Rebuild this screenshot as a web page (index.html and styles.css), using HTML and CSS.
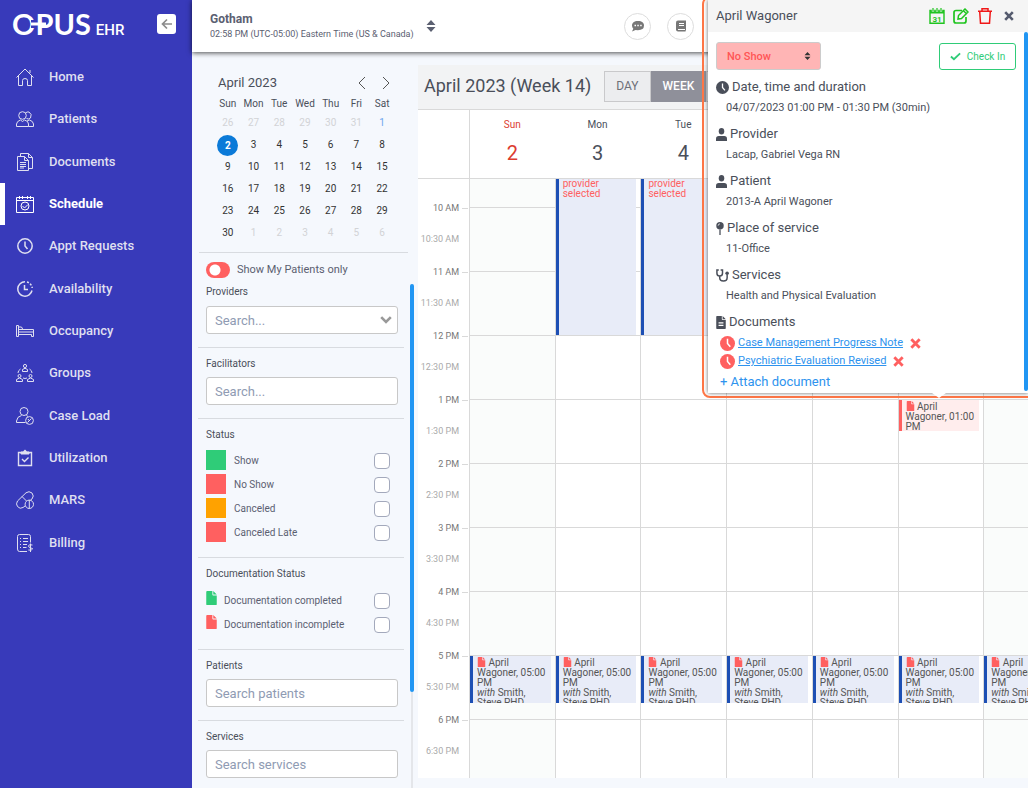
FILE: index.html
```html
<!DOCTYPE html>
<html lang="en">
<head>
<meta charset="utf-8">
<title>Opus EHR - Schedule</title>
<link rel="stylesheet" href="styles.css">
</head>
<body>
<svg class="sprite" aria-hidden="true">
  <symbol id="i-file" viewBox="0 0 12 16"><path fill="currentColor" d="M0 1Q0 0 1 0H7V4Q7 5 8 5H12V15Q12 16 11 16H1Q0 16 0 15ZM8 0L12 4H8Z"/></symbol>
  <symbol id="i-clock" viewBox="0 0 16 16"><circle cx="8" cy="8" r="8" fill="currentColor"/><path d="M8 3V8L11 11.500" fill="none" stroke="#fff" stroke-width="1.600"/></symbol>
  <symbol id="i-user" viewBox="0 0 14 14"><circle cx="7" cy="3.500" r="3.500" fill="currentColor"/><path fill="currentColor" d="M0 14V11.500Q0 8.500 3.500 8.500H10.500Q14 8.500 14 11.500V14Z"/></symbol>
  <symbol id="i-sort" viewBox="0 0 10 12"><path fill="currentColor" d="M5 0L9.500 5H.5ZM5 12L.5 7H9.500Z"/></symbol>
  <symbol id="i-times" viewBox="0 0 10 10"><path d="M1.200 1.200L8.800 8.800M8.800 1.200L1.200 8.800" stroke="currentColor" stroke-width="2.600" fill="none"/></symbol>
</svg>
<div class="app">
  <aside class="sidebar">
    <div class="brand">
      <div class="logo"><span class="logo-main">OPUS</span><span class="logo-sub">EHR</span><svg class="logo-link" viewBox="0 0 16 8" aria-hidden="true"><path d="M0 0H4V8H0Z" fill="#383aba"/><path d="M0 4H15" stroke="#fff" stroke-width="3"/></svg></div>
      <button class="collapse" type="button" aria-label="Collapse menu"><svg viewBox="0 0 12 12"><path d="M11 6H2M6 1.500L1.500 6L6 10.500" fill="none" stroke="#8c8c8c" stroke-width="1.700"/></svg></button>
    </div>
    <nav class="nav">
      <a href="#home"><svg viewBox="0 0 18 18"><path d="M.5 9.500L9 1L17.500 9.500M2.500 8V17.500H6.500V12.500Q6.500 10.500 9 10.500T11.500 12.500V17.500H15.500V8M14 2V5"/></svg>Home</a>
      <a href="#patients"><svg viewBox="0 0 18 18"><circle cx="6.500" cy="5.500" r="3.800"/><path d="M9.500 3Q11 1.500 13 2Q16.500 4 14.500 8Q13 9.800 10.500 8.500M.5 16.500V14Q1 11 4.500 10L6.500 11.500L8.500 10Q12.500 11 12.500 14V16.500ZM12.500 16.500H17.500V14Q17 11 13.500 10L11 11"/></svg>Patients</a>
      <a href="#documents"><svg viewBox="0 0 18 18"><path d="M1.500 3.500H8.500L12.500 7.500V17.500H1.500ZM8.500 3.500V7.500H12.500M4.500 3.500V.5H12.500L16.500 4.500V15.500H12.500M12.500.5V4.500H16.500M4 9.500H10M4 11.500H10M4 13.500H10M4 15H8"/></svg>Documents</a>
      <a class="active" href="#schedule"><svg viewBox="0 0 18 18"><path d="M.5 2.500H17.500V17.500H.5ZM.5 5.500H17.500M3.500 1V4M6.500 1V4M11.500 1V4M14.500 1V4M6.500 11L8.500 13L12 9.500"/><circle cx="9" cy="11" r="4"/></svg>Schedule</a>
      <a href="#requests"><svg viewBox="0 0 18 18"><circle cx="9" cy="9" r="7.200" stroke-width="1.500"/><path d="M9 4.500V9L11.500 12" stroke-width="1.500"/></svg>Appt Requests</a>
      <a href="#availability"><svg viewBox="0 0 18 18"><path d="M9 1.800A7.200 7.200 0 1 0 16 10.500" stroke-width="1.500"/><path d="M11 2A7.200 7.200 0 0 1 16.200 8" stroke-width="1.500" stroke-dasharray="2 1.500"/><path d="M8.500 5V9.500H12" stroke-width="1.500"/></svg>Availability</a>
      <a href="#occupancy"><svg viewBox="0 0 18 18"><path d="M.5 3.500H2.500V14.500H.5ZM2.500 7.500H17.500V14.500H15.500V12.500H2.500M2.500 10H17.500M3 5H5Q6.500 5 6.500 7.500"/></svg>Occupancy</a>
      <a href="#groups"><svg viewBox="0 0 18 18"><circle cx="9" cy="2" r="1.600"/><path d="M6.500 7.500V5.500Q9 3 11.500 5.500V7.500Z"/><circle cx="3.500" cy="12" r="1.500"/><path d="M.5 17.500V15.500Q3.500 12.500 6.500 15.500V17.500Z"/><circle cx="14.500" cy="12" r="1.500"/><path d="M11.500 17.500V15.500Q14.500 12.500 17.500 15.500V17.500ZM4.500 5Q2 6.500 2 9M13.500 5Q16 6.500 16 9M7 14Q9 15 11 14"/></svg>Groups</a>
      <a href="#caseload"><svg viewBox="0 0 18 18"><circle cx="8" cy="4.500" r="4"/><path d="M9.500 15.500H.5V14Q1 9.500 5.500 8.500M10.500 8.500L12 9.500"/><circle cx="13.500" cy="13.500" r="3.900"/><path d="M11.500 15.500L15.500 11.500M12 12L13 13.500"/></svg>Case Load</a>
      <a href="#utilization"><svg viewBox="0 0 18 18"><path d="M2.500 3.500H15.500V16.500H2.500Z" stroke-width="1.400"/><path d="M5 5V3H7.500Q9 -1 10.500 3H13V5Z" fill="currentColor"/><path d="M6 10L8.500 12.500L12.500 8.500" stroke-width="1.400"/></svg>Utilization</a>
      <a href="#mars"><svg viewBox="0 0 18 18"><path d="M1.500 10L10 1.800Q13 -.5 16 2Q18.500 5 16 8L14.500 9M1.500 10Q-.5 13 1.500 15.500Q4 18.500 7 16.500L9 15M6 5.500L10.500 10"/><circle cx="13.300" cy="13.300" r="4.200"/><path d="M13.300 9V17.500"/></svg>MARS</a>
      <a href="#billing"><svg viewBox="0 0 18 18"><path d="M11 17.500H3.500Q1.500 17.500 1.500 15V2.500Q1.500.5 3.500.5H12.500Q14.500.5 14.500 2.500V8.500M4 4.500H5M7 4.500H12M4 7.500H5M7 7.500H12M4 10.500H5M7 10.500H11M4 13.500H5M7 13.500H10.500"/><path d="M16.500 11Q12.500 10 12.500 12T16.500 14.500Q16.500 16.500 12.300 16M14.500 9.500V18"/></svg>Billing</a>
    </nav>
  </aside>

  <div class="main">
    <header class="topbar">
      <div class="tenant">
        <div><strong>Gotham</strong><span>02:58 PM (UTC-05:00) Eastern Time (US &amp; Canada)</span></div>
        <button type="button" aria-label="Change facility"><svg viewBox="0 0 10 12"><use href="#i-sort"/></svg></button>
      </div>
      <div class="tools">
        <button type="button" aria-label="Messages"><svg viewBox="0 0 14 14"><path fill="#777" d="M7 2C3 2 1 4 1 6.500Q1 8.500 2.300 9.700L1 12.500L4.500 11Q13 12 13 6.500C13 4 11 2 7 2Z"/><path stroke="#fff" stroke-width="1.500" d="M3.500 6.500H5M6.300 6.500H7.800M9.200 6.500H10.700"/></svg></button>
        <button type="button" aria-label="Manual"><svg viewBox="0 0 14 14"><path fill="#777" d="M4 1.500H12V10.500L11.500 12.500H4Q2 12.500 2 10.500V3.500Q2 1.500 4 1.500Z"/><path stroke="#fff" d="M5 4.500H10M5 6.500H10M4 10.500H11"/></svg></button>
      </div>
    </header>

    <div class="content">
      <section class="panel">
        <div class="mini">
          <div class="mini-head"><h2>April 2023</h2>
            <button type="button" aria-label="Previous month"><svg viewBox="0 0 8 14"><path d="M7 1L1 7L7 13"/></svg></button>
            <button type="button" aria-label="Next month"><svg viewBox="0 0 8 14"><path d="M1 1L7 7L1 13"/></svg></button>
          </div>
          <table>
            <thead><tr><th>Sun</th><th>Mon</th><th>Tue</th><th>Wed</th><th>Thu</th><th>Fri</th><th>Sat</th></tr></thead>
            <tbody>
              <tr><td class="off">26</td><td class="off">27</td><td class="off">28</td><td class="off">29</td><td class="off">30</td><td class="off">31</td><td class="today">1</td></tr>
              <tr><td><span class="picked">2</span></td><td>3</td><td>4</td><td>5</td><td>6</td><td>7</td><td>8</td></tr>
              <tr><td>9</td><td>10</td><td>11</td><td>12</td><td>13</td><td>14</td><td>15</td></tr>
              <tr><td>16</td><td>17</td><td>18</td><td>19</td><td>20</td><td>21</td><td>22</td></tr>
              <tr><td>23</td><td>24</td><td>25</td><td>26</td><td>27</td><td>28</td><td>29</td></tr>
              <tr><td>30</td><td class="off">1</td><td class="off">2</td><td class="off">3</td><td class="off">4</td><td class="off">5</td><td class="off">6</td></tr>
            </tbody>
          </table>
        </div>
        <div class="lower">
          <div class="filters">
            <label class="switch"><input type="checkbox">Show My Patients only</label>
            <div class="group first"><label for="prov">Providers</label><div class="combo"><input id="prov" type="text" placeholder="Search..."><svg viewBox="0 0 12 8"><path d="M1.200 1.200L6 6L10.800 1.200" fill="none" stroke="#999" stroke-width="2.600"/></svg></div></div>
            <div class="group"><label for="fac">Facilitators</label><input id="fac" type="text" placeholder="Search..."></div>
            <fieldset class="group"><legend>Status</legend>
              <label class="check"><i class="swatch green"></i><span>Show</span><input type="checkbox"></label>
              <label class="check"><i class="swatch red"></i><span>No Show</span><input type="checkbox"></label>
              <label class="check"><i class="swatch orange"></i><span>Canceled</span><input type="checkbox"></label>
              <label class="check"><i class="swatch red"></i><span>Canceled Late</span><input type="checkbox"></label>
            </fieldset>
            <fieldset class="group docs"><legend>Documentation Status</legend>
              <label class="check"><svg class="c-green"><use href="#i-file"/></svg><span>Documentation completed</span><input type="checkbox"></label>
              <label class="check"><svg class="c-red"><use href="#i-file"/></svg><span>Documentation incomplete</span><input type="checkbox"></label>
            </fieldset>
            <div class="group"><label for="pat">Patients</label><input id="pat" type="text" placeholder="Search patients"></div>
            <div class="group"><label for="srv">Services</label><input id="srv" type="text" placeholder="Search services"></div>
          </div>
          <div class="track"><div class="thumb"></div></div>
        </div>
      </section>

      <section class="week">
        <div class="week-bar"><h1>April 2023 (Week 14)</h1>
          <div class="views"><button type="button">DAY</button><button type="button" class="on">WEEK</button><button type="button">MONTH</button></div>
        </div>
        <div class="days">
          <div></div>
          <div class="sun">Sun<b>2</b></div><div>Mon<b>3</b></div><div>Tue<b>4</b></div><div>Wed<b>5</b></div><div>Thu<b>6</b></div><div>Fri<b>7</b></div><div>Sat<b>8</b></div>
        </div>
        <div class="grid">
          <div class="hours">
            <div>10 AM</div><div class="half">10:30 AM</div><div>11 AM</div><div class="half">11:30 AM</div>
            <div>12 PM</div><div class="half">12:30 PM</div><div>1 PM</div><div class="half">1:30 PM</div>
            <div>2 PM</div><div class="half">2:30 PM</div><div>3 PM</div><div class="half">3:30 PM</div>
            <div>4 PM</div><div class="half">4:30 PM</div><div>5 PM</div><div class="half">5:30 PM</div>
            <div>6 PM</div><div class="half">6:30 PM</div>
          </div>
          <div class="col weekend"><div class="event at5"><svg><use href="#i-file"/></svg> April Wagoner, 05:00 PM<br><em>with</em> Smith, Steve PHD</div></div>
          <div class="col"><div class="event morning">provider selected</div><div class="event at5"><svg><use href="#i-file"/></svg> April Wagoner, 05:00 PM<br><em>with</em> Smith, Steve PHD</div></div>
          <div class="col"><div class="event morning">provider selected</div><div class="event at5"><svg><use href="#i-file"/></svg> April Wagoner, 05:00 PM<br><em>with</em> Smith, Steve PHD</div></div>
          <div class="col"><div class="event at5"><svg><use href="#i-file"/></svg> April Wagoner, 05:00 PM<br><em>with</em> Smith, Steve PHD</div></div>
          <div class="col"><div class="event at5"><svg><use href="#i-file"/></svg> April Wagoner, 05:00 PM<br><em>with</em> Smith, Steve PHD</div></div>
          <div class="col"><div class="event at1"><svg><use href="#i-file"/></svg> April Wagoner, 01:00 PM</div><div class="event at5"><svg><use href="#i-file"/></svg> April Wagoner, 05:00 PM<br><em>with</em> Smith, Steve PHD</div></div>
          <div class="col weekend"><div class="event at5"><svg><use href="#i-file"/></svg> April Wagoner, 05:00 PM<br><em>with</em> Smith, Steve PHD</div></div>
        </div>
      </section>
    </div>
  </div>
</div>

<div class="frame">
  <article class="popup">
    <header class="popup-head"><h2>April Wagoner</h2>
      <button type="button" aria-label="Calendar"><svg class="c-lime" viewBox="0 0 16 16"><path d="M1 2.500H15V15.300H1Z" fill="none" stroke="currentColor" stroke-width="1.400"/><path d="M1 2H15V5.500H1Z" fill="currentColor"/><path d="M4 0V3.500M8 0V3.500M12 0V3.500" stroke="#f5f5f5" stroke-width="2.400"/><path d="M4 0V3M8 0V3M12 0V3" stroke="currentColor" stroke-width="1.200"/><text x="8" y="13.500" text-anchor="middle">31</text></svg></button>
      <button type="button" aria-label="Edit"><svg class="c-lime" viewBox="0 0 16 16"><path d="M9 2.500H3Q1 2.500 1 4.500V13Q1 15 3 15H11Q13 15 13 13V9" fill="none" stroke="currentColor" stroke-width="1.700"/><path d="M5 11L5.500 7.500L12 1L15 4L8.500 10.500ZM10.500 2.800L13.200 5.500" fill="none" stroke="currentColor" stroke-width="1.500"/></svg></button>
      <button type="button" aria-label="Delete"><svg class="c-trash" viewBox="0 0 16 16"><path d="M1 3.200H15M5 3V.8H11V3M2.700 3.500L3.500 15.200H12.500L13.300 3.500" fill="none" stroke="currentColor" stroke-width="1.500"/></svg></button>
      <button type="button" aria-label="Close"><svg class="c-slate small" viewBox="0 0 10 10"><use href="#i-times"/></svg></button>
    </header>
    <div class="popup-main">
      <div class="popup-body">
        <div class="actions">
          <div class="status"><select aria-label="Appointment status"><option>No Show</option></select><svg viewBox="0 0 10 12"><use href="#i-sort"/></svg></div>
          <button class="checkin" type="button"><svg viewBox="0 0 12 9"><path d="M1 4.500L4.300 7.500L11 1" fill="none" stroke="currentColor" stroke-width="2"/></svg>Check In</button>
        </div>
        <dl>
          <dt><svg class="w13" viewBox="0 0 16 16"><use href="#i-clock"/></svg>Date, time and duration</dt><dd>04/07/2023 01:00 PM - 01:30 PM (30min)</dd>
          <dt><svg class="w11" viewBox="0 0 14 14" preserveAspectRatio="none"><use href="#i-user"/></svg>Provider</dt><dd>Lacap, Gabriel Vega RN</dd>
          <dt><svg class="w11" viewBox="0 0 14 14" preserveAspectRatio="none"><use href="#i-user"/></svg>Patient</dt><dd>2013-A April Wagoner</dd>
          <dt><svg class="w8" viewBox="0 0 8 14"><circle cx="4" cy="4" r="4" fill="currentColor"/><path d="M4 8V14" stroke="currentColor" stroke-width="1.400"/><path d="M2 4Q2 2 4 2" stroke="#fff" stroke-width=".8" fill="none"/></svg>Place of service</dt><dd>11-Office</dd>
          <dt><svg class="w13" viewBox="0 0 14 14"><path d="M3 1H1V4.500Q1 7.500 4 7.500T7 4.500V1H5M4 7.500V9.500Q4 13 8 13T12 9.500V6" fill="none" stroke="currentColor" stroke-width="1.600"/><circle cx="12" cy="4.500" r="1.900" fill="currentColor"/></svg>Services</dt><dd>Health and Physical Evaluation</dd>
          <dt><svg class="w10" viewBox="0 0 12 16"><use href="#i-file"/><path d="M3 8.500H9M3 11.500H9" stroke="#fff" stroke-width="1.400"/></svg>Documents</dt>
        </dl>
        <ul class="doclist">
          <li><svg viewBox="0 0 16 16"><use href="#i-clock"/></svg><a href="#note">Case Management Progress Note</a><button type="button" aria-label="Remove note"><svg viewBox="0 0 10 10"><use href="#i-times"/></svg></button></li>
          <li><svg viewBox="0 0 16 16"><use href="#i-clock"/></svg><a href="#eval">Psychiatric Evaluation Revised</a><button type="button" aria-label="Remove evaluation"><svg viewBox="0 0 10 10"><use href="#i-times"/></svg></button></li>
        </ul>
        <a class="attach" href="#attach">+ Attach document</a>
      </div>
      <div class="popup-scroll"></div>
    </div>
  </article>
</div>
</body>
</html>
```
FILE: styles.css
```css
* { box-sizing: border-box; }
body { margin: 0; height: 100vh; overflow: hidden; position: relative; font: 11px/14px Roboto, "Liberation Sans", sans-serif; color: #4a4f5a; background: #f5f8fd; }
button { padding: 0; border: 0; background: none; font: inherit; color: inherit; display: flex; align-items: center; justify-content: center; }
h1, h2 { margin: 0; font-weight: 400; }
.sprite { display: none; }
.app { display: grid; grid-template-columns: 192px minmax(0, 1fr); grid-template-rows: minmax(0, 1fr); height: 100%; }

.sidebar { background: #383aba; color: #dfdff0; }
.brand { display: flex; justify-content: space-between; align-items: center; height: 56px; padding: 0 16px 8px 12px; }
.logo { position: relative; color: #fff; display: flex; align-items: baseline; gap: 5px; font-family: Lato, sans-serif; line-height: 40px; }
.logo-main { font-size: 29px; font-weight: 700; }
.logo-sub { font: 500 15px Roboto, sans-serif; }
.logo-link { position: absolute; left: 19px; top: 16px; width: 16px; height: 8px; }
.collapse { width: 19px; height: 20px; border-radius: 3px; background: #fff; }
.collapse svg { width: 12px; height: 12px; }
.nav { display: grid; grid-auto-rows: 1fr; height: 508px; }
.nav a { display: flex; align-items: center; gap: 15px; padding-left: 16px; color: inherit; text-decoration: none; font-size: 13px; font-weight: 500; }
.nav svg { width: 18px; height: 18px; fill: none; stroke: currentColor; }
.nav .active { border-left: 5px solid #fff; padding-left: 11px; color: #fff; font-weight: 700; }

.main { display: flex; flex-direction: column; min-width: 0; min-height: 0; }
.topbar { height: 52px; flex: none; display: flex; justify-content: space-between; align-items: center; padding: 0 334px 0 18px; background: #fff; box-shadow: 0 1px 5px rgba(0, 0, 0, .7); color: #5b6071; position: relative; z-index: 1; }
.tenant { display: flex; align-items: center; gap: 12px; }
.tenant strong { display: block; font-size: 12px; line-height: 15px; }
.tenant span { display: block; font-size: 9px; }
.tenant svg { width: 10px; height: 12px; }
.tools { display: flex; }
.tools button { width: 27px; height: 27px; border: 1px solid #ddd; border-radius: 50%; }
.tools button + button { margin-left: 16px; }
.tools svg { width: 14px; height: 14px; }

.content { display: flex; flex: 1; min-height: 0; }
.panel { width: 222px; flex: none; display: flex; flex-direction: column; }
.mini { margin: 21px 6px 0 7px; padding: 0 13px 8px 16px; border-bottom: 1px solid #d8dbe0; }
.mini-head { display: flex; align-items: center; padding: 0 5px 0 3px; height: 20px; }
.mini-head h2 { font-size: 13px; margin-right: auto; }
.mini-head button { margin-left: 16px; }
.mini-head svg { width: 8px; height: 14px; fill: none; stroke: #555; }
.mini table { width: 100%; table-layout: fixed; border-collapse: collapse; font-size: 10px; text-align: center; color: #333; }
.mini th { padding: 3px 0 0; height: 19px; font-weight: 400; color: #4a4f5a; }
.mini td { padding: 0; height: 22px; }
.mini .off { color: #d2d3d6; }
.mini .today { color: #6ca6ee; }
.picked { display: block; width: 21px; margin: auto; border-radius: 50%; line-height: 21px; background: #0b7ad8; color: #fff; font-weight: 700; }
.lower { display: flex; flex: 1; min-height: 0; }
.filters { flex: 1; padding: 9px 0 0 6px; }
.switch { display: flex; align-items: center; gap: 7px; padding-left: 8px; height: 16px; color: #5b6071; }
.switch input { appearance: none; margin: 0; width: 24px; height: 16px; border-radius: 8px; background: radial-gradient(circle at 9px 8px, #fff 5px, #ff6060 6px); }
.group { margin: 0; border: 0; border-top: 1px solid #d8dbe0; padding: 9px 6px 13px 8px; min-width: 0; }
.group.first { border: 0; padding-top: 7px; }
.group > label, .group legend { display: block; float: left; width: 100%; padding: 0; font-size: 10px; line-height: 14px; margin-bottom: 6px; }
.group.first > label { margin-bottom: 7px; }
.group input[type="text"] { width: 100%; height: 28px; border: 1px solid #c8c8c8; border-radius: 3px; padding: 0 8px; background: #fff; font: 13px Roboto, sans-serif; color: #444; }
.group input::placeholder { color: #8f9bb3; }
.combo { position: relative; clear: both; }
.combo svg { position: absolute; right: 6px; top: 10px; width: 12px; height: 8px; }
.filters .check { clear: both; display: flex; align-items: center; height: 20px; margin: 0 0 4px; color: #5b6071; line-height: 20px; }
.check span { padding-top: 2px; }
.group legend + .check { margin-top: 2px; }
.group .check:last-child { margin-bottom: 2px; }
.check input { appearance: none; width: 16px; height: 16px; margin: 2px 8px 0 auto; border: 1px solid #a3a9bc; border-radius: 4px; background: #fff; }
.swatch { width: 20px; height: 20px; margin-right: 8px; }
.green { background: #2fcc78; }
.red { background: #ff6060; }
.orange { background: #ffa200; }
.check svg { width: 11px; height: 14px; margin: 0 7px 4px 0; }
.c-green { color: #2fcc78; }
.c-red { color: #ff6060; }
.docs legend { margin-bottom: 7px; }
.track { width: 4px; margin: 31px 0 0 6px; background: linear-gradient(90deg, transparent 1px, #e4e6ea 1px 3px, transparent 3px); }
.thumb { height: 408px; border-radius: 2px; background: #2196f3; }

.week { flex: 1; min-width: 0; margin: 13px 0 10px 4px; background: #fff; overflow: hidden; display: flex; flex-direction: column; }
.week-bar { flex: none; height: 45px; display: flex; align-items: center; gap: 13px; padding: 0 6px 2px; background: #f2f3f4; border-bottom: 1px solid #d9d9d9; }
.week-bar h1 { font-size: 18px; line-height: 24px; white-space: nowrap; }
.views { display: flex; }
.views button { height: 31px; padding: 0 11px; border: 1px solid #c9c9cb; background: #ecedef; font-size: 12px; color: #6e7078; }
.views .on { background: #8f909a; border-color: #8f909a; color: #fff; font-weight: 500; }
.days, .grid { display: grid; grid-template-columns: 51px repeat(7, minmax(0, 1fr)); width: calc(100% + 41px); }
.days { flex: none; height: 69px; border-bottom: 1px solid #d9d9d9; }
.days div { display: flex; flex-direction: column; align-items: center; padding-top: 8px; font-size: 10px; }
.days div:nth-child(2) { border-left: 1px solid #d9d9d9; }
.days b { font-size: 20px; line-height: 24px; font-weight: 400; margin-top: 9px; }
.days .sun { color: #dc3c30; }
.grid { flex: 1; min-height: 0; overflow: hidden; }
.hours { padding-top: 13px; font-size: 9px; color: #777; }
.hours div { display: flex; justify-content: flex-end; align-items: center; gap: 3px; height: 32px; white-space: nowrap; padding-right: 1px; }
.hours div::after { content: ""; width: 6px; height: 1px; background: #d9d9d9; }
.hours .half { color: #aaa; padding-bottom: 2px; }
.hours .half::after { background: none; }
.col { border-left: 1px solid #d9d9d9; display: grid; grid-template-rows: 28px repeat(9, 64px); background: linear-gradient(#d9d9d9 1px, transparent 1px) 0 28px / 100% 64px #fff; min-width: 0; }
.weekend { background-color: #fafcfb; }
.event { grid-column: 1; margin-right: 4px; padding: 1px 0 0 4px; border-left: 3px solid #1d4fb4; background: #e8ecf8; font-size: 10px; line-height: 10px; overflow: hidden; color: #555; }
.event svg { width: 9px; height: 10px; color: #ff6060; vertical-align: -1px; }
.morning { grid-row: 1 / 4; color: #ff6060; padding-top: 0; }
.at5 { grid-row: 9; height: 47px; margin-top: 1px; }
.at1 { grid-row: 5; height: 31px; margin-top: 1px; border-color: #ff6060; background: #ffeded; }

.frame { position: absolute; z-index: 2; top: -4px; right: -10px; width: 336px; height: 402px; padding: 2px 8px 3px 4px; border: 2px solid #ff7747; border-radius: 8px; }
.popup { position: relative; height: 393px; background: #fff; box-shadow: 0 0 4px rgba(0, 0, 0, .6); display: flex; flex-direction: column; }
.popup::after { content: ""; position: absolute; left: 224px; top: 100%; border: 7px solid transparent; border-top: 5px solid #fff; border-bottom: 0; }
.popup-head { flex: none; height: 32px; display: flex; align-items: center; gap: 8px; padding: 0 14px 0 8px; background: #f5f5f5; }
.popup-head h2 { font-size: 13px; margin-right: auto; }
.popup-head svg { width: 16px; height: 16px; }
.popup-head text { font: 700 8px Roboto, sans-serif; fill: currentColor; }
.c-lime { color: #1fc41f; }
.c-trash { color: #f01818; }
.c-slate { color: #555b6e; }
.popup-head .small { width: 10px; height: 10px; margin-left: 3px; }
.popup-main { display: flex; flex: 1; }
.popup-body { flex: 1; padding: 10px 8px 0; }
.popup-scroll { width: 4px; height: 359px; background: #2196f3; border-radius: 2px; }
.actions { display: flex; justify-content: space-between; margin-bottom: 8px; }
.status { position: relative; }
.status select { appearance: none; width: 105px; height: 28px; padding: 0 10px; border: 1px solid #ccc; border-radius: 3px; background: #ffb5b5; color: #ff5555; font: 500 11px Roboto, sans-serif; }
.status svg { position: absolute; right: 10px; top: 10px; width: 7px; height: 8px; color: #333; pointer-events: none; }
.checkin { width: 77px; height: 27px; margin-top: 1px; gap: 6px; border: 1px solid #2fcc78; border-radius: 3px; color: #2fcc78; font-size: 10px; }
.checkin svg { width: 11px; height: 9px; }
dl { margin: 0; }
dt { display: flex; align-items: center; gap: 3px; height: 18px; font-size: 13px; }
dd { margin: 4px 0 8px 10px; height: 17px; line-height: 15px; }
dt svg { height: 13px; }
.w13 { width: 13px; }
.w11 { width: 11px; }
.w10 { width: 10px; }
.w8 { width: 8px; }
.doclist { list-style: none; margin: 0; padding: 3px 0 0 4px; }
.doclist li { display: flex; align-items: center; height: 18px; gap: 3px; color: #ff6060; }
.doclist svg { width: 15px; height: 15px; }
.doclist button { margin-left: 4px; }
.doclist button svg { width: 11px; height: 11px; }
.doclist a, .attach { color: #2e93ee; }
.attach { display: inline-block; margin: 5px 0 0 4px; font-size: 13px; text-decoration: none; }
```
